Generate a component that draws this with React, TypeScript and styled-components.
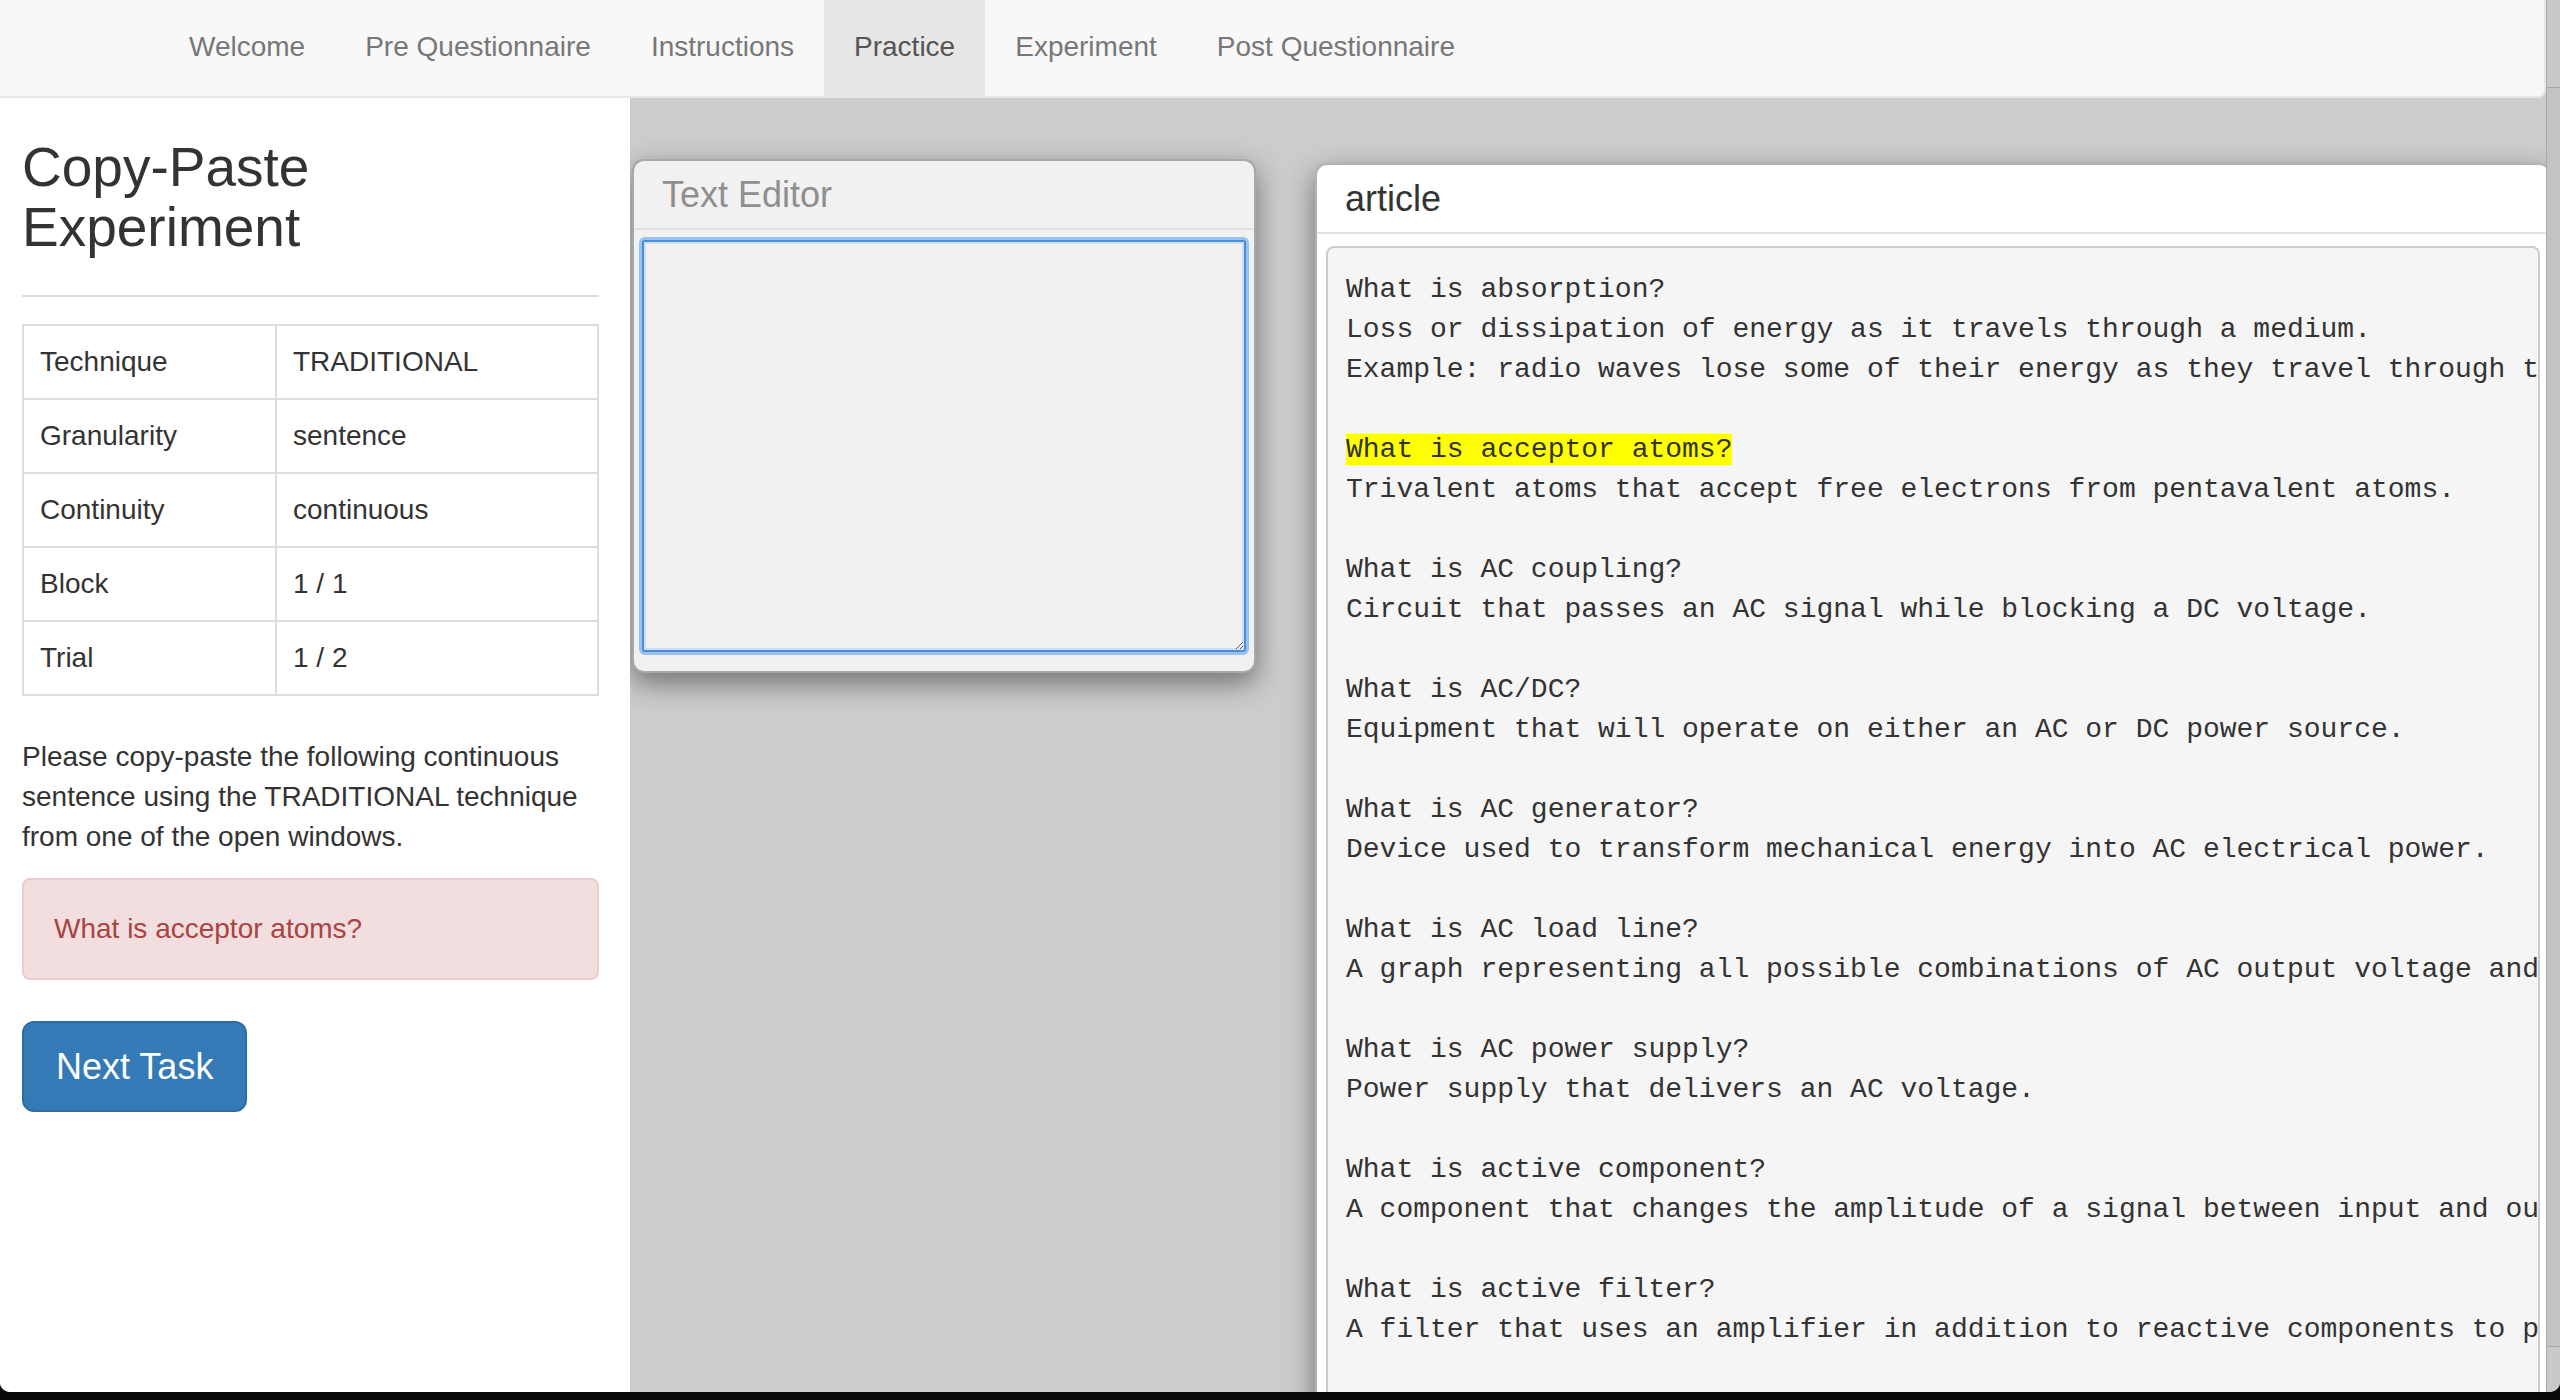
import { Fragment } from "react";
import styled, { createGlobalStyle } from "styled-components";

const navItems = ["Welcome", "Pre Questionnaire", "Instructions", "Practice", "Experiment", "Post Questionnaire"];

const settings: [string, string][] = [
  ["Technique", "TRADITIONAL"],
  ["Granularity", "sentence"],
  ["Continuity", "continuous"],
  ["Block", "1 / 1"],
  ["Trial", "1 / 2"],
];

const target = "acceptor atoms";

const glossary = [
  {
    term: "absorption",
    lines: [
      "Loss or dissipation of energy as it travels through a medium.",
      "Example: radio waves lose some of their energy as they travel through the atmosphere.",
    ],
  },
  { term: "acceptor atoms", lines: ["Trivalent atoms that accept free electrons from pentavalent atoms."] },
  { term: "AC coupling", lines: ["Circuit that passes an AC signal while blocking a DC voltage."] },
  { term: "AC/DC", lines: ["Equipment that will operate on either an AC or DC power source."] },
  { term: "AC generator", lines: ["Device used to transform mechanical energy into AC electrical power."] },
  {
    term: "AC load line",
    lines: ["A graph representing all possible combinations of AC output voltage and output current for an amplifier."],
  },
  { term: "AC power supply", lines: ["Power supply that delivers an AC voltage."] },
  {
    term: "active component",
    lines: ["A component that changes the amplitude of a signal between input and output."],
  },
  {
    term: "active filter",
    lines: ["A filter that uses an amplifier in addition to reactive components to provide a frequency response."],
  },
  { term: "active region", lines: ["The region of transistor operation between saturation and cutoff."] },
];

const GlobalStyle = createGlobalStyle`
  * { box-sizing: border-box; }
  html, body {
    margin: 0;
    padding: 0;
  }
  body {
    font-family: "Liberation Sans", Arial, Helvetica, sans-serif;
    font-size: 28px;
    line-height: 40px;
    color: #333;
    background: #0a0a0a;
  }
`;

const App = () => {
  return (
    <>
      <GlobalStyle />
      <Screen>
        <Window>
          <Page>
            <Navbar>
              <NavList>
                {navItems.map((item) => (
                  <NavLink key={item} $active={item === "Practice"}>
                    {item}
                  </NavLink>
                ))}
              </NavList>
            </Navbar>

            <Content>
              {/* left column with the task */}
              <Sidebar>
                <Title>Copy-Paste Experiment</Title>
                <Divider />
                <SettingsTable>
                  <tbody>
                    {settings.map(([label, value]) => (
                      <tr key={label}>
                        <LabelCell>{label}</LabelCell>
                        <Cell>{value}</Cell>
                      </tr>
                    ))}
                  </tbody>
                </SettingsTable>
                <Instructions>
                  Please copy-paste the following continuous sentence using the TRADITIONAL technique from one of the
                  open windows.
                </Instructions>
                <Alert>What is acceptor atoms?</Alert>
                <PrimaryButton>Next Task</PrimaryButton>
              </Sidebar>

              {/* windows on the gray desktop */}
              <Workspace>
                <EditorWindow>
                  <WindowHeader $muted>Text Editor</WindowHeader>
                  <EditorBody>
                    <EditorArea defaultValue="" />
                  </EditorBody>
                </EditorWindow>

                <ArticleWindow>
                  <WindowHeader>article</WindowHeader>
                  <ArticleBody>
                    <Pre>
                      {glossary.map((g) => (
                        <Fragment key={g.term}>
                          {g.term === target ? <Mark>{`What is ${g.term}?`}</Mark> : `What is ${g.term}?`}
                          {"\n" + g.lines.join("\n") + "\n\n"}
                        </Fragment>
                      ))}
                    </Pre>
                  </ArticleBody>
                </ArticleWindow>
              </Workspace>
            </Content>
          </Page>

          <ScrollTrack>
            <ScrollThumb />
          </ScrollTrack>
        </Window>
      </Screen>
    </>
  );
};

const Screen = styled.div`
  width: 2560px;
  height: 1400px;
  background: #0a0a0a;
  overflow: hidden;
`;

const Window = styled.div`
  display: flex;
  height: 1392px;
  overflow: hidden;
  border-radius: 0 0 10px 10px;
  background: #ccc;
`;

const Page = styled.div`
  flex: 1;
  min-width: 0;
  display: flex;
  flex-direction: column;
  background: #ccc;
`;

const Navbar = styled.nav`
  flex-shrink: 0;
  height: 98px;
  background: #f8f8f8;
  border-bottom: 2px solid #e7e7e7;
  border-right: 2px solid #e7e7e7;
  border-radius: 0 0 8px 0;
`;

const NavList = styled.div`
  display: flex;
  padding-left: 159px;
`;

const NavLink = styled.a<{ $active?: boolean }>`
  display: block;
  padding: 27px 30px 29px;
  line-height: 40px;
  font-size: 28px;
  color: ${({ $active }) => ($active ? "#555" : "#777")};
  background: ${({ $active }) => ($active ? "#e7e7e7" : "transparent")};
  cursor: pointer;
`;

const Content = styled.div`
  flex: 1;
  min-height: 0;
  display: flex;
`;

const Sidebar = styled.aside`
  flex-shrink: 0;
  width: 630px;
  background: #fff;
  padding: 39px 31px 0 22px;
`;

const Title = styled.h1`
  margin: 0;
  font-size: 55px;
  line-height: 60px;
  font-weight: 400;
  color: #333;
`;

const Divider = styled.hr`
  margin: 38px 0 27px;
  border: 0;
  border-top: 2px solid #dcdcdc;
`;

const SettingsTable = styled.table`
  width: 100%;
  table-layout: fixed;
  border-collapse: collapse;
  margin-bottom: 41px;
`;

const Cell = styled.td`
  border: 2px solid #ddd;
  padding: 16px;
  line-height: 40px;
  vertical-align: top;
`;

const LabelCell = styled(Cell)`
  width: 253px;
`;

const Instructions = styled.p`
  margin: 0 0 21px;
`;

const Alert = styled.div`
  padding: 29px 30px;
  margin-bottom: 41px;
  background: #f2dede;
  border: 2px solid #ebccd1;
  border-radius: 8px;
  color: #a94442;
`;

const PrimaryButton = styled.button`
  display: inline-block;
  padding: 20px 32px;
  font-family: inherit;
  font-size: 36px;
  line-height: 47px;
  color: #fff;
  background: #337ab7;
  border: 2px solid #2e6da4;
  border-radius: 12px;
  cursor: pointer;
`;

const Workspace = styled.main`
  flex: 1;
  min-width: 0;
  display: flex;
  align-items: flex-start;
  padding: 61px 0 0 2px;
  overflow: hidden;
  background: #ccc;
`;

const PanelWindow = styled.section`
  flex-shrink: 0;
  border: 2px solid rgba(0, 0, 0, 0.3);
  border-radius: 12px;
  box-shadow: 0 10px 28px rgba(0, 0, 0, 0.45);
  overflow: hidden;
`;

const EditorWindow = styled(PanelWindow)`
  width: 624px;
  background: #f1f1f1;
`;

const ArticleWindow = styled(PanelWindow)`
  width: 1236px;
  height: 1300px;
  margin: 4px 0 0 59px;
  background: #fff;
`;

const WindowHeader = styled.header<{ $muted?: boolean }>`
  height: 69px;
  padding: 14px 28px 0;
  font-size: 36px;
  line-height: 40px;
  color: ${({ $muted }) => ($muted ? "#8f8f8f" : "#333")};
  border-bottom: 2px solid #e2e2e2;
`;

const EditorBody = styled.div`
  padding: 10px 8px 19px;
`;

const EditorArea = styled.textarea`
  display: block;
  width: 100%;
  height: 412px;
  margin: 0;
  background: #f0f0f0;
  border: 2px solid #4a8ddb;
  border-radius: 3px;
  box-shadow: 0 0 0 3px rgba(125, 178, 238, 0.75), inset 0 0 0 2px #cfe0f5;
  outline: none;
  resize: both;
  font-family: inherit;
  font-size: 28px;
`;

const ArticleBody = styled.div`
  padding: 12px 9px 10px;
`;

const Pre = styled.pre`
  margin: 0;
  padding: 22px 0 20px 18px;
  font-family: "Liberation Mono", "Courier New", monospace;
  font-size: 28px;
  line-height: 40px;
  color: #333;
  background: #f5f5f5;
  border: 2px solid #ccc;
  border-radius: 8px;
  white-space: pre;
  overflow: hidden;
`;

const Mark = styled.mark`
  background: #ffff00;
  color: inherit;
`;

const ScrollTrack = styled.div`
  flex-shrink: 0;
  width: 14px;
  padding-top: 87px;
  background: #c9c9c9;
  border-left: 1px solid #a9a9a9;
`;

const ScrollThumb = styled.div`
  height: 1260px;
  background: #c3c3c3;
  border-top: 1px solid #a6a6a6;
  border-bottom: 1px solid #a6a6a6;
`;

export default App;
